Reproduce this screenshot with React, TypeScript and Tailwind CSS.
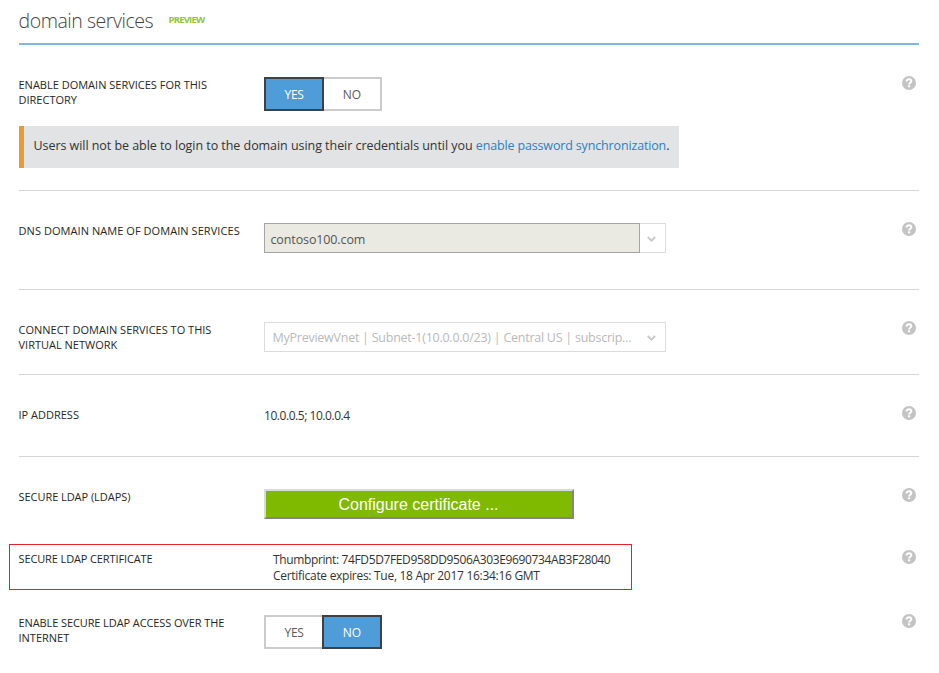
import type { ReactNode } from "react";

function HelpIcon() {
  return (
    <svg className="mr-[3px] block size-[14px] shrink-0" viewBox="0 0 14 14" aria-label="Help">
      <circle cx="7" cy="7" r="7" fill="#c4c4c4" />
      <path d="M4.6 5.5C4.6 4 5.6 3.3 7 3.3s2.3.7 2.3 1.9c0 1.5-2.2 1.6-2.2 3.2" fill="none" stroke="#fff" strokeWidth="2" />
      <rect x="6" y="9.3" width="2.1" height="1.9" fill="#fff" />
    </svg>
  );
}

function Chevron() {
  return (
    <svg className="block h-[7px] w-[9px]" viewBox="0 0 9 7" aria-hidden="true">
      <path d="M0.8 1 4.5 4.7 8.2 1" fill="none" stroke="#c8c8c8" strokeWidth="1.8" />
    </svg>
  );
}

function Row({ label, className, children }: { label: ReactNode; className: string; children: ReactNode }) {
  return (
    <div className={`flex items-start ${className}`}>
      <div className="mt-px -ml-[0.5px] w-[245.5px] shrink-0 text-[11px] leading-[15px] whitespace-nowrap text-[#262626]">{label}</div>
      <div className="min-w-0 flex-1">{children}</div>
      <HelpIcon />
    </div>
  );
}

function Toggle({ value }: { value: "YES" | "NO" }) {
  const on = "border-2 border-[#3f4245] bg-[#4f9dd8] text-white w-[60px]";
  const off = "border-2 border-[#cbcbcb] bg-white text-[#5a5a5a] w-[58px]";
  return (
    <div className="flex h-[34px] w-[118px] text-[12px]">
      <div className={`flex items-center justify-center pt-[2px] ${value === "YES" ? on : `${off} border-r-0`}`}>
        <span className="tracking-[-0.4px]">YES</span>
      </div>
      <div className={`flex items-center justify-center pt-[2px] ${value === "NO" ? on : `${off} border-l-0`}`}>
        <span>NO</span>
      </div>
    </div>
  );
}

export default function App() {
  return (
    <main className="h-[673px] w-[939px] overflow-hidden bg-white pl-[19px] pr-5 font-['Open_Sans','Noto_Sans',sans-serif] text-[#333]">
      <header className="flex h-[45px] items-start border-b-2 border-[#81b8e2]">
        <h1 className="mt-[7px] -ml-[0.5px] w-[150px] whitespace-nowrap text-[19.5px] leading-[28px] font-light tracking-[-0.45px] text-[#444]">domain services</h1>
        <span className="mt-[14px] text-[9.5px] leading-[12px] font-bold tracking-[-0.8px] text-[#8cc63f]">PREVIEW</span>
      </header>

      <section className="h-[146px] border-b border-[#d6d6d6] pt-[31px]">
        <Row className="h-[50px]" label={<><div>ENABLE DOMAIN SERVICES FOR THIS</div><div>DIRECTORY</div></>}>
          <div className="mt-px"><Toggle value="YES" /></div>
        </Row>
        <div className="flex h-[42px] w-[660px] items-center border-l-[5px] border-[#e69b37] bg-[#e1e3e5] pb-[2px] pl-[9.5px] text-[12.5px] whitespace-nowrap">
          <span className="tracking-[-0.05px]">Users will not be able to login to the domain using their credentials until you&nbsp;</span>
          <a className="tracking-[-0.15px] text-[#2d7fc1]">enable password synchronization</a>
          <span>.</span>
        </div>
      </section>

      <section className="h-[99px] border-b border-[#d6d6d6] pt-[31px]">
        <Row className="" label={<span className="tracking-[0.06px]">DNS DOMAIN NAME OF DOMAIN SERVICES</span>}>
          <div className="mt-px flex h-[30px] w-[402px] text-[12.5px]">
            <div className="flex w-[376px] items-center border border-[#a5a5a5] bg-[#eaeae2] pt-[4px] pl-[5.5px] text-[#555]">
              <span className="tracking-[-0.12px]">contoso100.com</span>
            </div>
            <div className="flex flex-1 items-center justify-center border border-l-0 border-[#dcdcdc] pr-[2px] pt-[3px]"><Chevron /></div>
          </div>
        </Row>
      </section>

      <section className="h-[85px] border-b border-[#d6d6d6] pt-[31px]">
        <Row className="" label={<><div>CONNECT DOMAIN SERVICES TO THIS</div><div>VIRTUAL NETWORK</div></>}>
          <div className="mt-px flex h-[30px] w-[402px] items-center justify-between border border-[#dcdcdc] pr-[9px] pl-[7.5px] text-[12.5px] whitespace-nowrap text-[#bababa]">
            <span className="pt-[2px] tracking-[-0.25px]">MyPreviewVnet | Subnet-1(10.0.0.0/23) | Central US | subscrip...</span>
            <div className="pt-[3px]"><Chevron /></div>
          </div>
        </Row>
      </section>

      <section className="h-[82px] border-b border-[#d6d6d6] pt-[31px]">
        <Row className="" label="IP ADDRESS">
          <div className="mt-[2px] text-[12px] leading-[16px] tracking-[-0.45px]">10.0.0.5; 10.0.0.4</div>
        </Row>
      </section>

      <Row className="h-[87px] pt-[31px]" label={<span className="tracking-[-0.05px]">SECURE LDAP (LDAPS)</span>}>
        <button className="mt-px block h-[30px] w-[310px] border-2 border-t-[#dadada] border-r-[#858585] border-b-[#858585] border-l-[#dadada] bg-[#80ba00] pt-px pr-px font-['Liberation_Sans',Arial,sans-serif] text-[16px] leading-[25px] text-white">
          Configure certificate ...
        </button>
      </Row>

      <div className="-ml-[10px] flex items-start">
        <div className="flex h-[46px] w-[623px] border border-[#e5202c] pl-[8.5px]">
          <div className="mt-[6px] w-[254.5px] shrink-0 text-[11px] leading-[15px] tracking-[-0.12px] text-[#262626]">SECURE LDAP CERTIFICATE</div>
          <div className="mt-[7px] text-[12px] leading-[16px] whitespace-nowrap">
            <div className="tracking-[-0.37px]">Thumbprint: 74FD5D7FED958DD9506A303E9690734AB3F28040</div>
            <div className="tracking-[-0.29px]">Certificate expires: Tue, 18 Apr 2017 16:34:16 GMT</div>
          </div>
        </div>
        <div className="mt-[6px] ml-auto"><HelpIcon /></div>
      </div>

      <Row className="pt-[24px]" label={<><div className="tracking-[-0.1px]">ENABLE SECURE LDAP ACCESS OVER THE</div><div>INTERNET</div></>}>
        <div className="mt-px"><Toggle value="NO" /></div>
      </Row>
    </main>
  );
}
